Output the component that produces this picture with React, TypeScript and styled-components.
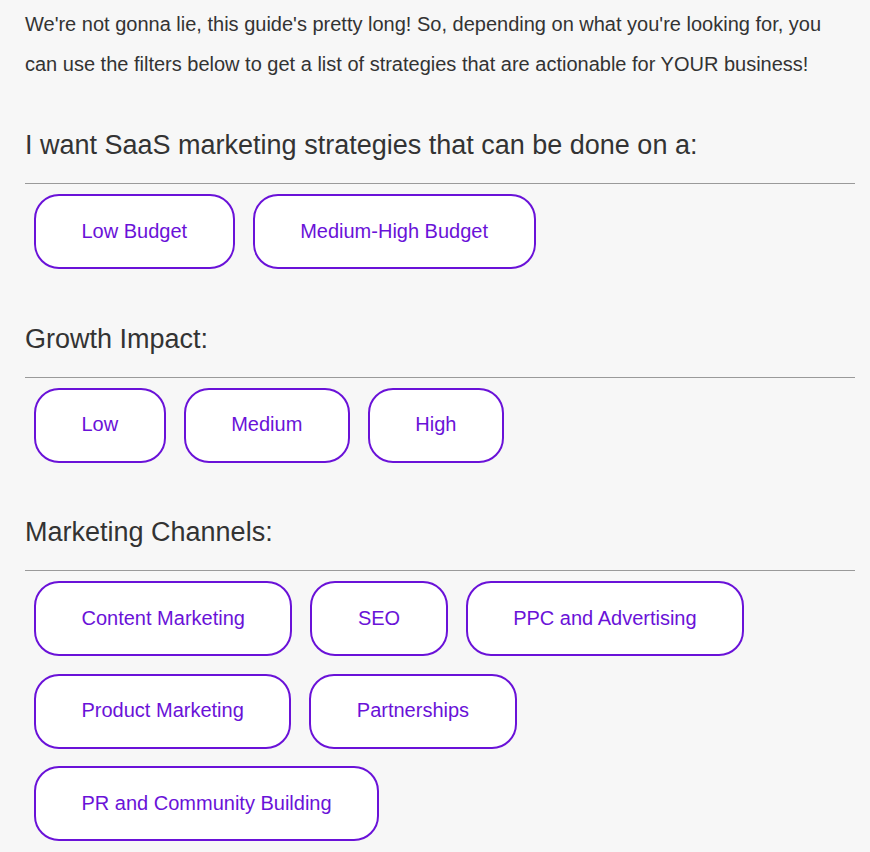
import React from "react";
import styled, { createGlobalStyle } from "styled-components";

const Global = createGlobalStyle`
  html, body { margin: 0; padding: 0; background: #f7f7f7; }
  body { font-family: "Liberation Sans", Arial, sans-serif; }
`;

const Page = styled.div`
  padding: 4px 15px 0 25px;
  color: #333;
`;

const Intro = styled.p`
  margin: 0;
  font-size: 20px;
  line-height: 40px;
  color: #333;
`;

const Section = styled.section<{ $first?: boolean }>`
  margin-top: ${(p) => (p.$first ? "45px" : "53.5px")};
`;

const Heading = styled.h2`
  margin: 0;
  font-size: 27px;
  font-weight: 400;
  line-height: 32px;
  color: #333;
`;

const Rule = styled.hr`
  margin: 22px 0 0;
  border: 0;
  border-top: 1px solid #9a9a9a;
  height: 0;
`;

const Options = styled.div`
  display: flex;
  flex-wrap: wrap;
  column-gap: 18px;
  row-gap: 17.5px;
  padding: 10px 0 0 9px;
`;

const FilterButton = styled.button`
  box-sizing: border-box;
  height: 75px;
  padding: 0 45.5px 2px;
  border: 2px solid #6a12d8;
  border-radius: 25px;
  background: #fff;
  color: #6a12d8;
  font-family: "Liberation Sans", Arial, sans-serif;
  font-size: 20px;
  line-height: 22px;
  cursor: pointer;
`;

const groups = [
  {
    title: "I want SaaS marketing strategies that can be done on a:",
    items: ["Low Budget", "Medium-High Budget"],
  },
  { title: "Growth Impact:", items: ["Low", "Medium", "High"] },
  {
    title: "Marketing Channels:",
    items: [
      "Content Marketing",
      "SEO",
      "PPC and Advertising",
      "Product Marketing",
      "Partnerships",
      "PR and Community Building",
    ],
  },
];

export default function App() {
  return (
    <>
      <Global />
      <Page>
        <Intro>
          We're not gonna lie, this guide's pretty long! So, depending on what you're looking for, you
          can use the filters below to get a list of strategies that are actionable for YOUR business!
        </Intro>
        {groups.map((g, i) => (
          <Section key={g.title} $first={i === 0}>
            <Heading>{g.title}</Heading>
            <Rule />
            <Options>
              {g.items.map((it) => (
                <FilterButton key={it}>{it}</FilterButton>
              ))}
            </Options>
          </Section>
        ))}
      </Page>
    </>
  );
}
